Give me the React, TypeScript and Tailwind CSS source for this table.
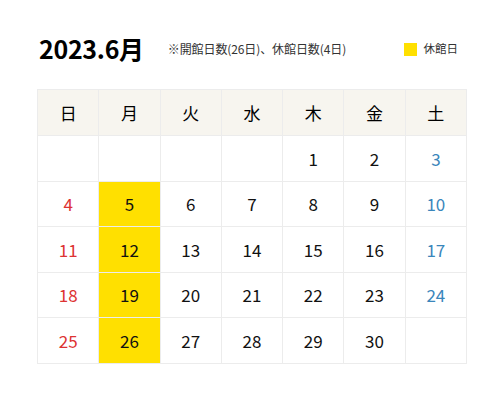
import React from 'react';

const days = ['日', '月', '火', '水', '木', '金', '土'];

// null = empty cell
const weeks: Array<Array<number | null>> = [
  [null, null, null, null, 1, 2, 3],
  [4, 5, 6, 7, 8, 9, 10],
  [11, 12, 13, 14, 15, 16, 17],
  [18, 19, 20, 21, 22, 23, 24],
  [25, 26, 27, 28, 29, 30, null],
];

const closed = [5, 12, 19, 26];

const App = () => {
  return (
    <div
      className="w-[504px] h-[393px] bg-white pl-[37px] pt-[32px]"
      style={{ fontFamily: '"Noto Sans CJK JP", "Noto Sans", sans-serif' }}
    >
      {/* Header */}
      <div className="flex items-center w-[429px] h-[32px]">
        <h1 className="ml-[2px] text-[25px] font-bold text-black leading-none tracking-[-0.3px]">2023.6月</h1>
        <p className="ml-[24px] text-[12px] text-[#333] leading-none tracking-[-0.1px] mt-[2px]">
          ※開館日数(26日)、休館日数(4日)
        </p>
        <div className="ml-auto mr-[8px] flex items-center mt-[2px]">
          <span className="w-[13px] h-[13px] bg-[#ffe000] inline-block" />
          <span className="ml-[7px] text-[11.5px] text-[#333] leading-none">休館日</span>
        </div>
      </div>

      {/* Calendar */}
      <table className="mt-[25px] w-[430px] table-fixed border-collapse">
        <thead>
          <tr className="h-[46px]">
            {days.map((d) => (
              <th key={d} className="border border-[#ececec] bg-[#f7f5ef] text-[17px] font-normal text-black">
                {d}
              </th>
            ))}
          </tr>
        </thead>
        <tbody>
          {weeks.map((week, wi) => (
            <tr key={wi} className="h-[45.5px]">
              {week.map((day, di) => {
                let color = 'text-[#111]';
                if (di === 0) color = 'text-[#dd3333]';
                if (di === 6) color = 'text-[#3a86bb]';
                const isClosed = day !== null && closed.includes(day);
                return (
                  <td
                    key={di}
                    className={`border border-[#ececec] text-center text-[17px] ${color} ${isClosed ? 'bg-[#ffe000]' : 'bg-white'}`}
                  >
                    {day ?? ''}
                  </td>
                );
              })}
            </tr>
          ))}
        </tbody>
      </table>
    </div>
  );
};

export default App;
